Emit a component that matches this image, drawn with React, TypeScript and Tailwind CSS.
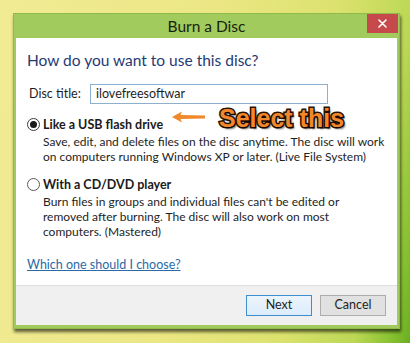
import React from "react";

const font = { fontFamily: 'Lato, "Open Sans", sans-serif' };

export default function App() {
  return (
    <div
      className="relative w-[410px] h-[343px] overflow-hidden pt-[13px] pl-[13px] bg-[linear-gradient(100deg,#f1eb94_0%,#ece785_45%,#dce26e_72%,#bcd855_88%,#86c030_96%,#6aae22_100%)]"
      style={font}
    >
      {/* window */}
      <div className="w-[387px] h-[316px] flex flex-col bg-[#a2cb5e] border border-[#8fbb4c] shadow-[1px_3px_3px_rgba(0,0,0,0.6)]">
        {/* title bar */}
        <div className="h-[24px] grid grid-cols-[1fr_auto_1fr] items-start">
          <div />
          <div className="pt-[3px] text-[15.5px] leading-[18px] text-[#17240c]">Burn a Disc</div>
          <div className="flex justify-end pr-[1px]">
            <div className="w-[31px] h-[19px] bg-[#c6494b] flex items-center justify-center">
              <svg width="9" height="9" viewBox="0 0 9 9">
                <path d="M1 1 L8 8 M8 1 L1 8" stroke="#fff" strokeWidth="1.6" strokeLinecap="round" />
              </svg>
            </div>
          </div>
        </div>
        {/* client */}
        <div className="flex-1 flex flex-col mx-[2px] mb-[3px] bg-white">
          <div className="flex-1 flex flex-col pl-[11px] pt-[12px] text-[12px] text-[#1e1e1e]">
            <div className="text-[15.5px] leading-[21px] text-[#1f3b73]">How do you want to use this disc?</div>
            <div className="flex items-center mt-[13px] pl-[2px]">
              <span className="w-[61px] leading-[16px] text-[12.5px]">Disc title:</span>
              <div className="w-[238px] h-[20px] border border-[#8db0cf] flex items-center pl-[5px] leading-[16px] text-[12.5px]">
                ilovefreesoftwar
              </div>
            </div>
            {/* option 1 */}
            <div className="flex mt-[12px]">
              <div className="pt-[2px] w-[16px]">
                <div className="w-[13px] h-[13px] rounded-full border border-[#3c3c3c] bg-white flex items-center justify-center">
                  <div className="w-[7px] h-[7px] rounded-full bg-[#1a1a1a]" />
                </div>
              </div>
              <div>
                <div className="font-bold text-[12.5px] leading-[17px] text-[#1a1a1a]">Like a USB flash drive</div>
                <div className="mt-[1px] leading-[15px] whitespace-nowrap">
                  Save, edit, and delete files on the disc anytime. The disc will work
                  <br />
                  on computers running Windows XP or later. (Live File System)
                </div>
              </div>
            </div>
            {/* option 2 */}
            <div className="flex mt-[12px]">
              <div className="pt-[2px] w-[16px]">
                <div className="w-[13px] h-[13px] rounded-full border border-[#5a5a5a] bg-white" />
              </div>
              <div>
                <div className="font-bold text-[12.5px] leading-[17px] text-[#1a1a1a]">With a CD/DVD player</div>
                <div className="mt-[1px] leading-[15px] whitespace-nowrap">
                  Burn files in groups and individual files can't be edited or
                  <br />
                  removed after burning. The disc will also work on most
                  <br />
                  computers. (Mastered)
                </div>
              </div>
            </div>
            <div className="mt-[18px] leading-[16px] text-[12.5px] text-[#2a6aa6] underline">Which one should I choose?</div>
          </div>
          {/* footer */}
          <div className="h-[40px] bg-[#f0f0f0] border-t border-[#dfdfdf] flex items-center justify-end gap-[8px] pr-[11px] text-[12.5px] text-[#1e1e1e]">
            <div className="w-[66px] h-[21px] border border-[#3d8fd0] bg-[linear-gradient(#ecf4fc,#dcecfc)] flex items-center justify-center">
              Next
            </div>
            <div className="w-[66px] h-[21px] border border-[#adadad] bg-[#e1e1e1] flex items-center justify-center">
              Cancel
            </div>
          </div>
        </div>
      </div>

      {/* annotation overlay */}
      <svg className="absolute left-[172px] top-[111px]" width="34" height="12" viewBox="0 0 34 12">
        <path d="M0 6 L10 0.5 L8.5 4 L33 4.6 L33 7.4 L8.5 8 L10 11.5 Z" fill="#f0892b" />
      </svg>
      <div
        className="absolute left-[219px] top-[104px] text-[25px] leading-[28px] font-bold text-[#f3872c] [-webkit-text-stroke:3px_#2a1200] [paint-order:stroke_fill] [text-shadow:2px_2px_2px_rgba(0,0,0,0.6)]"
        style={{ fontFamily: '"Liberation Sans", Arial, sans-serif' }}
      >
        Select this
      </div>
    </div>
  );
}
